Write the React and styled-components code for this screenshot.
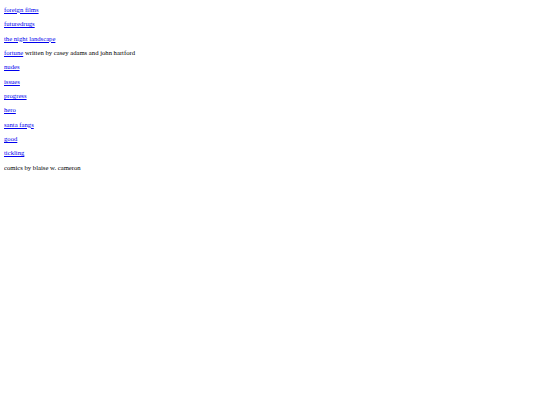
import React from "react";
import styled, { createGlobalStyle } from "styled-components";

const GlobalStyle = createGlobalStyle`
  body {
    margin: 4px;
    background: #ffffff;
    font-family: "Liberation Serif", "Times New Roman", serif;
    font-size: 6.67px;
    color: #000000;
  }
`;

const List = styled.div`
  display: flex;
  flex-direction: column;
`;

const Entry = styled.p`
  margin: 6.67px 0 0;
  line-height: 7.7px;
  &:first-child {
    margin-top: 1.9px;
  }
`;

const Link = styled.a`
  color: #0000ee;
  text-decoration: underline;
`;

const links = [
  { title: "foreign films" },
  { title: "futuredrugs" },
  { title: "the night landscape" },
  { title: "fortune", note: " written by casey adams and john hartford" },
  { title: "nudes" },
  { title: "issues" },
  { title: "progress" },
  { title: "hero" },
  { title: "santa fangs" },
  { title: "good" },
  { title: "tickling" },
];

const App = () => {
  return (
    <>
      <GlobalStyle />
      <List>
        {links.map((item) => (
          <Entry key={item.title}>
            <Link href="#">{item.title}</Link>
            {item.note}
          </Entry>
        ))}
        <Entry>comics by blaise w. cameron</Entry>
      </List>
    </>
  );
};

export default App;
